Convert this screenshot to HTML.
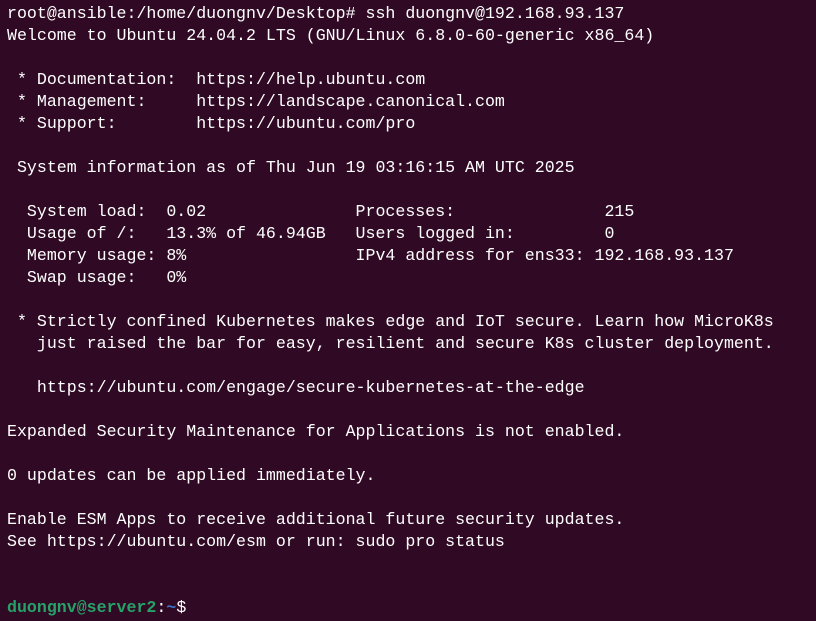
<!DOCTYPE html>
<html><head><meta charset="utf-8"><style>
html,body{margin:0;padding:0;background:#300a24;width:816px;height:621px;overflow:hidden}
pre{margin:0;padding:3px 0 0 7px;font-family:"Liberation Mono","DejaVu Sans Mono",monospace;font-size:16.6px;line-height:22px;color:#ffffff;white-space:pre}
.g{color:#26a269;font-weight:bold}.b{color:#3d6fc4;font-weight:bold}
</style></head><body><pre>root@ansible:/home/duongnv/Desktop# ssh duongnv@192.168.93.137
Welcome to Ubuntu 24.04.2 LTS (GNU/Linux 6.8.0-60-generic x86_64)

 * Documentation:  https://help.ubuntu.com
 * Management:     https://landscape.canonical.com
 * Support:        https://ubuntu.com/pro

 System information as of Thu Jun 19 03:16:15 AM UTC 2025

  System load:  0.02               Processes:               215
  Usage of /:   13.3% of 46.94GB   Users logged in:         0
  Memory usage: 8%                 IPv4 address for ens33: 192.168.93.137
  Swap usage:   0%

 * Strictly confined Kubernetes makes edge and IoT secure. Learn how MicroK8s
   just raised the bar for easy, resilient and secure K8s cluster deployment.

   https://ubuntu.com/engage/secure-kubernetes-at-the-edge

Expanded Security Maintenance for Applications is not enabled.

0 updates can be applied immediately.

Enable ESM Apps to receive additional future security updates.
See https://ubuntu.com/esm or run: sudo pro status


<span class="g">duongnv@server2</span>:<span class="b">~</span>$ </pre></body></html>
